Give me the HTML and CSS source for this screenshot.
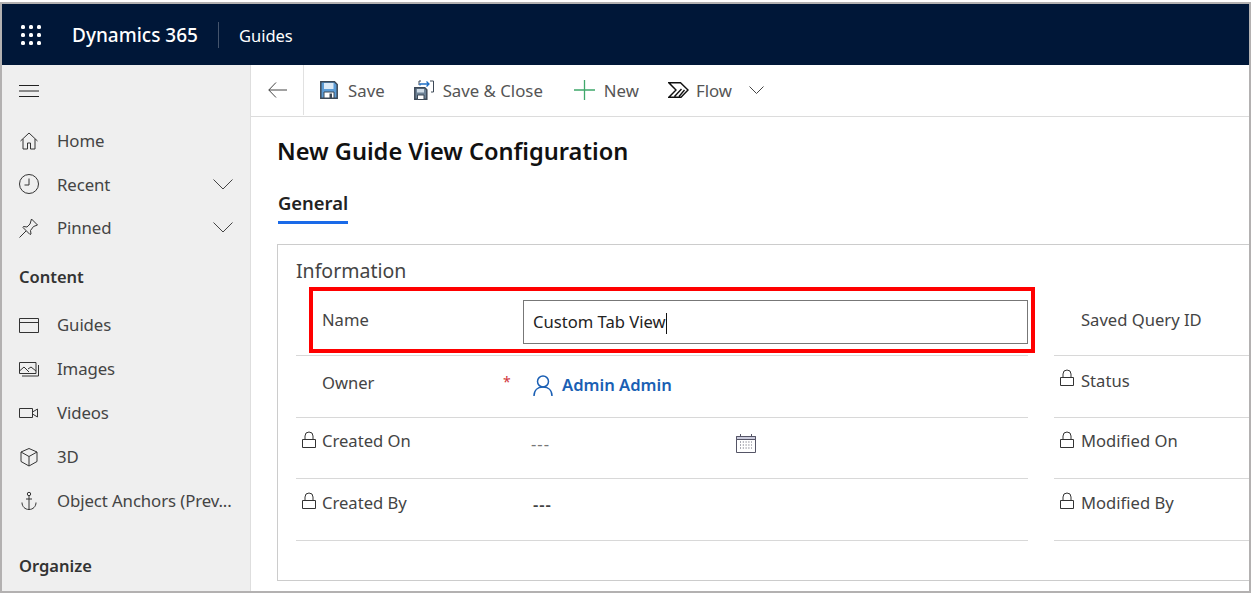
FILE: index.html
```html
<!DOCTYPE html>
<html lang="en">
<head>
    <meta charset="UTF-8">
    <title>New Guide View Configuration</title>
    <link rel="stylesheet" href="styles.css">
</head>
<body>
<div class="frame">
    <header class="topbar">
        <svg class="waffle" width="20" height="20" viewBox="0 0 20 20" fill="#fff">
            <rect x="0" y="0" width="4" height="4" rx="1.5"/><rect x="8" y="0" width="4" height="4" rx="1.5"/><rect x="16" y="0" width="4" height="4" rx="1.5"/>
            <rect x="0" y="8" width="4" height="4" rx="1.5"/><rect x="8" y="8" width="4" height="4" rx="1.5"/><rect x="16" y="8" width="4" height="4" rx="1.5"/>
            <rect x="0" y="16" width="4" height="4" rx="1.5"/><rect x="8" y="16" width="4" height="4" rx="1.5"/><rect x="16" y="16" width="4" height="4" rx="1.5"/>
        </svg>
        <span class="brand">Dynamics 365</span>
        <span class="app">Guides</span>
    </header>
    <div class="main">
        <nav class="sidebar">
            <div class="toggle">
                <svg width="20" height="14" viewBox="0 0 20 14" stroke="#222" fill="none"><path d="M0 1.500h20M0 7h20M0 12.500h20"/></svg>
            </div>
            <div class="nav-item">
                <svg class="nav-icon" viewBox="0 0 20 20"><path d="M1.500 10 10 2l8.500 8M4 8v10h4.500v-6h3v6H16V8"/></svg>
                <span class="nav-text">Home</span>
            </div>
            <div class="nav-item">
                <svg class="nav-icon" viewBox="0 0 20 20"><circle cx="10" cy="10" r="9.500"/><path d="M10 4.500V11H5.500"/></svg>
                <span class="nav-text">Recent</span>
                <svg class="chevron" width="20" height="11" viewBox="0 0 20 11"><path d="M.5.5 10 10 19.500.500"/></svg>
            </div>
            <div class="nav-item">
                <svg class="nav-icon" viewBox="0 0 20 20"><path d="M.5 19.500 7 13M12.500 1 18.500 7l-4 1.500-3 4 .5 3.500-1 .5L4 9.500l.5-1 3.500.5 3-3z"/></svg>
                <span class="nav-text">Pinned</span>
                <svg class="chevron" width="20" height="11" viewBox="0 0 20 11"><path d="M.5.5 10 10 19.500.500"/></svg>
            </div>
            <div class="nav-title content-title">Content</div>
            <div class="nav-item">
                <svg class="nav-icon" viewBox="0 0 20 20"><path d="M.5 3.500h19v14H.5zM.5 7.500h19"/></svg>
                <span class="nav-text">Guides</span>
            </div>
            <div class="nav-item">
                <svg class="nav-icon" viewBox="0 0 20 20"><path d="M.5 3.500h16.500v11H.5zM3 17h16.500V6M.5 12l4.500-4 5 5M9 10l3-2 5 4"/></svg>
                <span class="nav-text">Images</span>
            </div>
            <div class="nav-item">
                <svg class="nav-icon" viewBox="0 0 20 20"><path d="M.5 5.500h13v9H.5zM13.500 9l5-3v8l-5-3"/></svg>
                <span class="nav-text">Videos</span>
            </div>
            <div class="nav-item">
                <svg class="nav-icon" viewBox="0 0 20 20"><path d="M10 1.500 18 5v9.500l-8 4.500-8-4.500V5zM2 5l8 4.500L18 5M10 9.500V19"/></svg>
                <span class="nav-text">3D</span>
            </div>
            <div class="nav-item">
                <svg class="nav-icon" viewBox="0 0 20 20"><circle cx="10" cy="3" r="1.700"/><path d="M10 4.700V18.500M7 8h6M3 11.500c0 4 3 7 7 7s7-3 7-7"/></svg>
                <span class="nav-text">Object Anchors (Prev...</span>
            </div>
            <div class="nav-title organize-title">Organize</div>
        </nav>
        <div class="page">
            <div class="commandbar">
                <div class="back">
                    <svg width="19" height="16" viewBox="0 0 19 16" fill="none" stroke="#444"><path d="M8 .5.8 8 8 15.500M.8 8H19"/></svg>
                </div>
                <div class="cmd cmd-save">
                    <svg width="18" height="18" viewBox="0 0 18 18"><path d="M.8.800h13.700l2.700 2.700v13.700H.8z" fill="#5b9bd5" stroke="#3c4856" stroke-width="1.500"/><path d="M4 2h9.500v6H4z" fill="#dbe9f6"/><path d="M4 11h10v6H4z" fill="#fff" stroke="#3c4856"/><path d="M9.500 12.500h2.500V17H9.500z" fill="#3c4856"/></svg>
                    <span>Save</span>
                </div>
                <div class="cmd cmd-close">
                    <svg width="20" height="20" viewBox="0 0 20 20"><path d="M.8 7.800h10l2 2v9.400H.8z" fill="#6d8296" stroke="#3c4856" stroke-width="1.500"/><path d="M3 9h7v3.500H3z" fill="#cfdbe6"/><path d="M3.500 15h6.500v4.500H3.500z" fill="#fff" stroke="#3c4856"/><path d="M5 5V1h2M16 1h3.500v11H17" fill="none" stroke="#3c4856"/><path d="M6 5.500V4h9M12.500 1.500 15 4l-2.500 2.500" fill="none" stroke="#1f6fc5" stroke-width="1.300"/></svg>
                    <span>Save &amp; Close</span>
                </div>
                <div class="cmd cmd-new">
                    <svg width="21" height="20" viewBox="0 0 21 20" fill="none" stroke="#3fa86b" stroke-width="1.300"><path d="M10.500 0v20M0 10h21"/></svg>
                    <span>New</span>
                </div>
                <div class="cmd cmd-flow">
                    <svg width="21" height="16" viewBox="0 0 21 16" fill="none" stroke="#111" stroke-width="1.400"><path d="M.9.800h11.600l7.500 7.200-7 7.200H.9L8 8zM6.500 14.500l7-7.500M11 14.500l5.500-6.500"/></svg>
                    <span>Flow</span>
                    <svg class="flow-chevron" width="15" height="8" viewBox="0 0 15 8" fill="none" stroke="#444"><path d="M.5.500l7 7 7-7"/></svg>
                </div>
            </div>
            <div class="form">
                <h1 class="title">New Guide View Configuration</h1>
                <div class="tabs"><span class="tab">General</span></div>
                <section class="section">
                    <h2 class="section-title">Information</h2>
                    <div class="grid">
                        <div class="column column-left">
                            <div class="row row-name">
                                <span class="label">Name</span>
                                <div class="input">Custom Tab View<span class="caret"></span></div>
                                <div class="highlight"></div>
                            </div>
                            <div class="row row-owner">
                                <span class="label">Owner</span>
                                <span class="required">*</span>
                                <div class="value owner">
                                    <svg width="20" height="21" viewBox="0 0 20 21" fill="none" stroke="#1a5fb4" stroke-width="1.500"><circle cx="10" cy="6.500" r="5.500"/><path d="M1 21c0-6 4-9 9-9s9 3 9 9"/></svg>
                                    <span class="owner-name">Admin Admin</span>
                                </div>
                            </div>
                            <div class="row">
                                <svg class="lock" width="14" height="18" viewBox="0 0 14 18"><path d="M3 8V5a4 4 0 0 1 8 0v3M.5 8.500h13v8H.5z"/></svg>
                                <span class="label">Created On</span>
                                <div class="value dim">---</div>
                                <svg class="calendar" width="20" height="19" viewBox="0 0 20 19"><path d="M.5 2.500h19v16H.5z" fill="#fff" stroke="#556"/><path d="M.5 2.500h19v3H.5z" fill="#ccd" stroke="#556"/><path d="M4.500 0v3M15.500 0v3" stroke="#556"/><path d="M4 8h12M4 11h12M4 14h12" stroke="#556" stroke-dasharray="1 1.800"/></svg>
                            </div>
                            <div class="row">
                                <svg class="lock" width="14" height="18" viewBox="0 0 14 18"><path d="M3 8V5a4 4 0 0 1 8 0v3M.5 8.500h13v8H.5z"/></svg>
                                <span class="label">Created By</span>
                                <div class="value dark">---</div>
                            </div>
                        </div>
                        <div class="column column-right">
                            <div class="row row-name">
                                <span class="label">Saved Query ID</span>
                            </div>
                            <div class="row row-status">
                                <svg class="lock" width="14" height="18" viewBox="0 0 14 18"><path d="M3 8V5a4 4 0 0 1 8 0v3M.5 8.500h13v8H.5z"/></svg>
                                <span class="label">Status</span>
                            </div>
                            <div class="row">
                                <svg class="lock" width="14" height="18" viewBox="0 0 14 18"><path d="M3 8V5a4 4 0 0 1 8 0v3M.5 8.500h13v8H.5z"/></svg>
                                <span class="label">Modified On</span>
                            </div>
                            <div class="row">
                                <svg class="lock" width="14" height="18" viewBox="0 0 14 18"><path d="M3 8V5a4 4 0 0 1 8 0v3M.5 8.500h13v8H.5z"/></svg>
                                <span class="label">Modified By</span>
                            </div>
                        </div>
                    </div>
                </section>
            </div>
        </div>
    </div>
</div>
</body>
</html>
```

FILE: styles.css
```css
body {
    margin: 0;
    background: #fff;
    font-family: "Noto Sans", "Open Sans", sans-serif;
    color: #444;
}
.frame {
    width: 1251px;
    height: 591px;
    margin-top: 2px;
    box-sizing: border-box;
    border: 2px solid #b3b1b1;
    overflow: hidden;
    display: flex;
    flex-direction: column;
}

/* top bar */
.topbar {
    height: 61px;
    flex: none;
    background: #001738;
    color: #fff;
    display: flex;
    align-items: center;
}
.waffle { margin-left: 19px; }
.brand {
    margin-left: 31px;
    font-size: 19px;
    font-weight: 500;
    padding: 1px 20px 0 0;
    border-right: 1px solid #44546c;
    line-height: 25px;
}
.app {
    margin-left: 20px;
    padding-top: 2px;
    font-size: 16.5px;
}

.main {
    flex: 1;
    display: flex;
    min-height: 0;
}

/* left nav */
.sidebar {
    width: 248px;
    flex: none;
    background: #efefef;
    border-right: 1px solid #dedede;
}
.toggle {
    height: 52px;
    padding-left: 17px;
    display: flex;
    align-items: center;
}
.nav-item {
    height: 43.5px;
    display: flex;
    align-items: center;
    padding-left: 17px;
    font-size: 16.8px;
    color: #444;
}
.toggle + .nav-item { margin-top: 2px; }
.content-title ~ .nav-item { height: 43.9px; }
.nav-icon {
    width: 20px;
    height: 20px;
    flex: none;
    fill: none;
    stroke: #333;
    margin-right: 18px;
}
.nav-text {
    width: 176px;
    flex: none;
    white-space: nowrap;
    letter-spacing: -0.1px;
}
.chevron {
    fill: none;
    stroke: #444;
    margin-left: -20px;
}
.nav-title {
    height: 44px;
    line-height: 44px;
    padding-left: 17px;
    font-size: 16.5px;
    font-weight: 600;
    color: #333;
}
.content-title { margin: 5.5px 0 4px; }
.organize-title { margin-top: 21.4px; }

/* command bar */
.page {
    flex: 1;
    min-width: 0;
}
.commandbar {
    height: 52px;
    box-sizing: border-box;
    display: flex;
    align-items: center;
    padding-bottom: 1px;
    border-bottom: 1px solid #dcdcdc;
    font-size: 16.8px;
    color: #555;
}
.back {
    width: 53px;
    height: 100%;
    box-sizing: border-box;
    border-right: 1px solid #e1e1e1;
    display: flex;
    align-items: center;
    justify-content: center;
}
.cmd {
    display: flex;
    align-items: center;
    gap: 10px;
}
.cmd-save { margin-left: 16px; }
.cmd-close { margin-left: 29px; gap: 9px; }
.cmd-new { margin-left: 31px; gap: 9px; }
.cmd-flow { margin-left: 29px; gap: 7px; }
.flow-chevron { margin-left: 10px; }

/* form */
.form {
    padding: 1px 0 0 26px;
}
.title {
    margin: 0;
    padding-top: 16px;
    font-size: 23.6px;
    line-height: 34px;
    font-weight: 600;
    color: #111;
}
.tabs {
    margin-top: 23px;
    display: flex;
}
.tab {
    font-size: 18.4px;
    line-height: 24px;
    font-weight: 600;
    color: #222;
    padding-bottom: 6px;
    border-bottom: 3px solid #1a6ae8;
    margin-left: 1px;
}
.section {
    margin-top: 20px;
    height: 337px;
    box-sizing: border-box;
    border: 1px solid #ccc;
    border-right: 0;
    padding: 13px 0 0 18px;
}
.section-title {
    margin: 0;
    font-size: 19.5px;
    line-height: 26px;
    font-weight: 400;
    color: #444;
}
.grid {
    display: flex;
    gap: 26px;
    margin-top: 6px;
}
.column-left { width: 732px; flex: none; }
.column-right { flex: 1; }
.row {
    position: relative;
    height: 61.5px;
    box-sizing: border-box;
    display: flex;
    align-items: flex-start;
    padding: 12.5px 0 0 26px;
    border-bottom: 1px solid #d8d8d8;
    font-size: 16.6px;
}
.row.row-name {
    height: 66px;
    padding-top: 19px;
}
.row.row-owner { padding-top: 16px; }
.row.row-status { padding-top: 14px; }
.column-right .row { padding-left: 27px; }
.label {
    line-height: 22px;
    white-space: nowrap;
    color: #444;
}
.lock {
    position: absolute;
    left: 6px;
    top: 13px;
    fill: none;
    stroke: #333;
}
.input {
    position: absolute;
    left: 227px;
    right: 0;
    top: 10px;
    height: 44px;
    box-sizing: border-box;
    border: 1px solid #777;
    padding-left: 9px;
    line-height: 42px;
    color: #222;
}
.caret {
    display: inline-block;
    width: 1px;
    height: 21px;
    background: #111;
    vertical-align: middle;
}
.highlight {
    position: absolute;
    left: 13px;
    top: -3px;
    width: 726px;
    height: 66px;
    box-sizing: border-box;
    border: 4px solid #f00;
}
.required {
    position: absolute;
    left: 207px;
    top: 16px;
    color: #d13438;
    font-size: 14px;
}
.value {
    position: absolute;
    left: 235px;
    top: 15px;
    line-height: 22px;
    letter-spacing: 1px;
}
.value.dim { color: #777; }
.value.dark { color: #444; font-weight: 600; left: 237px; }
.owner {
    left: 237px;
    top: 18px;
    display: flex;
    align-items: center;
    gap: 9px;
    letter-spacing: 0;
}
.owner-name {
    color: #1a5fb4;
    font-weight: 600;
}
.calendar {
    position: absolute;
    left: 440px;
    top: 16px;
}
```
